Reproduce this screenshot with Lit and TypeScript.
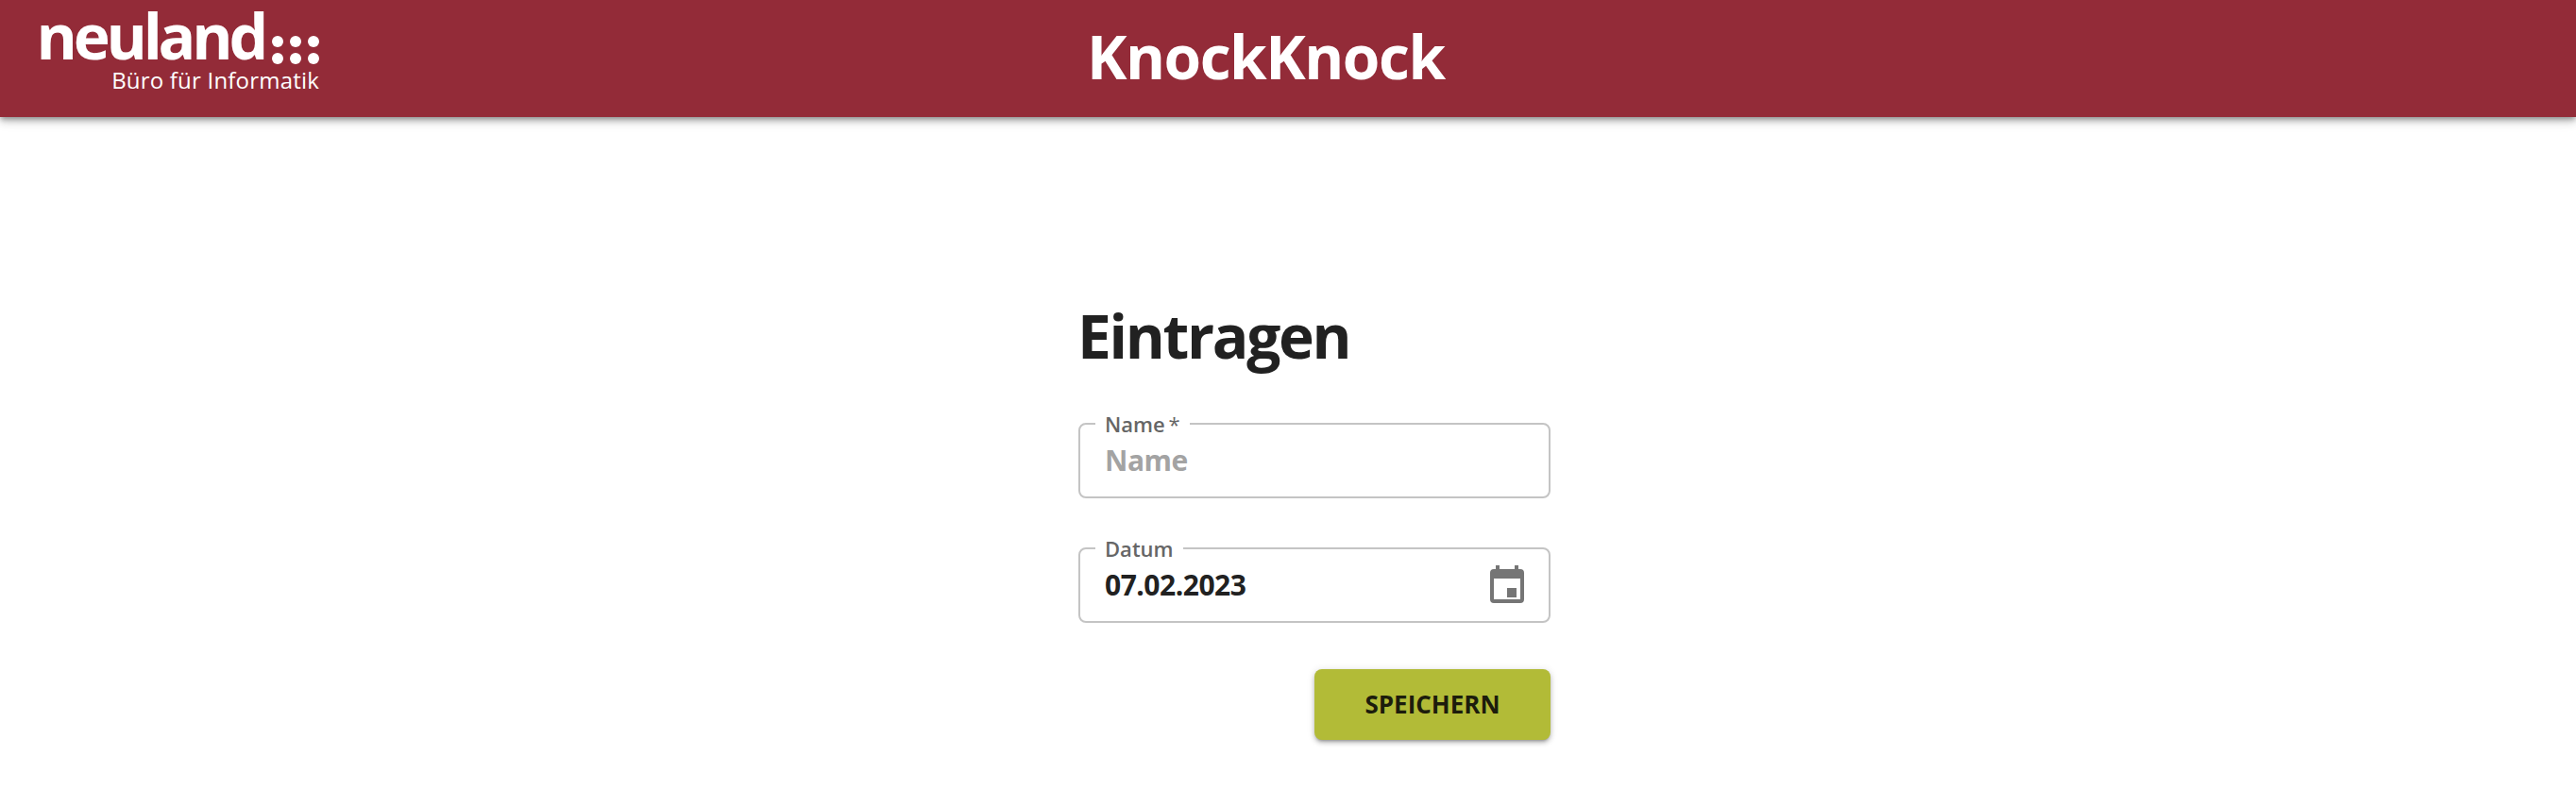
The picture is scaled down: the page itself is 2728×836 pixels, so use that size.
import { LitElement, html, css } from 'lit';
import { customElement } from 'lit/decorators.js';

@customElement('app-root')
export class AppRoot extends LitElement {
  static styles = css`
    :host {
      display: block;
      min-height: 836px;
      background: #fff;
      font-family: 'Open Sans', 'Noto Sans', sans-serif;
      color: #212121;
    }

    .topbar {
      display: flex;
      align-items: flex-start;
      height: 124px;
      background: #932b38;
      color: #fff;
      box-shadow: 0 3px 5px -1px rgba(0, 0, 0, 0.3), 0 5px 8px rgba(0, 0, 0, 0.16), 0 1px 16px rgba(0, 0, 0, 0.12);
    }

    .logo {
      display: flex;
      flex-direction: column;
      align-items: flex-end;
      width: 296px;
      margin-left: 42px;
      padding-top: 3px;
    }

    .wordmark {
      display: flex;
      align-items: flex-end;
      height: 68px;
    }

    .wordmark-text {
      font-size: 66px;
      font-weight: 700;
      line-height: 68px;
      letter-spacing: -4.2px;
    }

    .dots {
      display: grid;
      grid-template-columns: repeat(3, 12px);
      gap: 6px 7px;
      margin: 0 0 3px 8px;
    }

    .dots i {
      width: 12px;
      height: 12px;
      border-radius: 50%;
      background: #fff;
    }

    .claim {
      font-size: 24px;
      line-height: 30px;
      margin-top: -1px;
      letter-spacing: 0.2px;
    }

    .title {
      margin-left: 813px;
      font-size: 64px;
      font-weight: 700;
      line-height: 120px;
      letter-spacing: -1.5px;
    }

    main {
      display: flex;
      justify-content: center;
      padding: 187px 0 0 56px;
    }

    .form {
      display: flex;
      flex-direction: column;
      width: 500px;
    }

    h1 {
      margin: 0 0 36px;
      font-size: 64px;
      font-weight: 700;
      line-height: 90px;
      letter-spacing: -2.3px;
      text-indent: -1px;
    }

    fieldset {
      width: 100%;
      min-width: 0;
      height: 91px;
      margin: 0 0 41px;
      padding: 2px 24px 0 26px;
      box-sizing: border-box;
      border: 2px solid #c4c4c4;
      border-radius: 8px;
    }

    legend {
      padding: 0 10px;
      margin-left: -10px;
      font-size: 22px;
      font-weight: 600;
      line-height: 24px;
      color: #666;
    }

    .req {
      font-weight: 400;
      margin-left: -2px;
    }

    .row {
      display: flex;
      align-items: center;
      height: 48px;
    }

    input {
      flex: 1;
      width: 0;
      min-width: 0;
      padding: 0;
      border: 0;
      outline: 0;
      background: transparent;
      font: 700 30px 'Open Sans', 'Noto Sans', sans-serif;
      letter-spacing: -0.5px;
      color: #212121;
    }

    input::placeholder {
      color: #a3a3a3;
      opacity: 1;
    }

    .icon {
      width: 48px;
      height: 48px;
      margin-right: -4px;
      fill: #757575;
      flex: none;
    }

    .actions {
      display: flex;
      justify-content: flex-end;
      margin-top: 8px;
    }

    button {
      width: 250px;
      height: 75px;
      padding: 0 0 2px;
      border: 0;
      border-radius: 8px;
      background: #b2bb37;
      color: #1c1c0c;
      font: 700 26px 'Open Sans', 'Noto Sans', sans-serif;
      letter-spacing: 0;
      box-shadow: 0 3px 3px -2px rgba(0, 0, 0, 0.25), 0 3px 5px rgba(0, 0, 0, 0.2), 0 1px 8px rgba(0, 0, 0, 0.12);
    }
  `;

  render() {
    return html`
      <header class="topbar">
        <div class="logo">
          <div class="wordmark">
            <span class="wordmark-text">neuland</span>
            <span class="dots"><i></i><i></i><i></i><i></i><i></i><i></i></span>
          </div>
          <div class="claim">Büro für Informatik</div>
        </div>
        <div class="title">KnockKnock</div>
      </header>
      <main>
        <form class="form">
          <h1>Eintragen</h1>
          <fieldset>
            <legend>Name <span class="req">*</span></legend>
            <div class="row">
              <input type="text" placeholder="Name" />
            </div>
          </fieldset>
          <fieldset>
            <legend>Datum</legend>
            <div class="row">
              <input type="text" .value=${'07.02.2023'} />
              <svg class="icon" viewBox="0 0 24 24">
                <path d="M19 4h-1V2h-2v2H8V2H6v2H5a2 2 0 0 0-2 2v14a2 2 0 0 0 2 2h14a2 2 0 0 0 2-2V6a2 2 0 0 0-2-2zm0 16H5V9h14v11zm-7-6h5v5h-5z" />
              </svg>
            </div>
          </fieldset>
          <div class="actions"><button type="button">SPEICHERN</button></div>
        </form>
      </main>
    `;
  }
}
